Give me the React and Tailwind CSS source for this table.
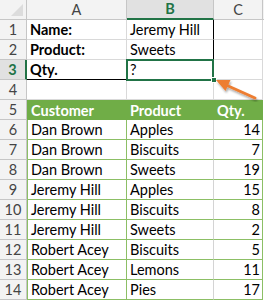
const data = [
  [6, "Dan Brown", "Apples", 14],
  [7, "Dan Brown", "Biscuits", 7],
  [8, "Dan Brown", "Sweets", 19],
  [9, "Jeremy Hill", "Apples", 15],
  [10, "Jeremy Hill", "Biscuits", 8],
  [11, "Jeremy Hill", "Sweets", 2],
  [12, "Robert Acey", "Biscuits", 5],
  [13, "Robert Acey", "Lemons", 11],
  [14, "Robert Acey", "Pies", 17],
]

function Cell({ className = "", children }) {
  return (
    <div className={"h-5 overflow-hidden whitespace-nowrap flex items-end leading-[18px] text-[14.5px] " + className}>
      {children}
    </div>
  )
}

function RowNum({ n, className = "" }) {
  return (
    <Cell className={"justify-center bg-[#f3f3f3] border-r border-b border-[#c6c6c6] text-[#444] " + className}>
      {n}
    </Cell>
  )
}

const grid = "border-r border-b border-[#d9d9d9]"

export default function App() {
  return (
    <div className="relative w-[264px] h-[300px] overflow-hidden bg-white text-black" style={{ fontFamily: "Lato, 'Liberation Sans', sans-serif" }}>
      <div className="grid grid-cols-[27px_100px_87px_49px_1fr] auto-rows-[20px]">
        {/* column headers */}
        <div className="h-5 bg-[#f3f3f3] border-r border-b border-[#c6c6c6] flex items-end justify-end p-[3px]">
          <svg width="12" height="12" viewBox="0 0 12 12"><polygon points="12,0 12,12 0,12" fill="#dcdcdc" /></svg>
        </div>
        <Cell className="justify-center bg-[#f3f3f3] border-r border-b border-[#c6c6c6] text-[#444]">A</Cell>
        <Cell className="justify-center bg-[#e1e1e1] border-r border-[#c6c6c6] border-b-2 border-b-[#217346] text-[#217346] font-bold">B</Cell>
        <Cell className="justify-center bg-[#f3f3f3] border-r border-b border-[#c6c6c6] text-[#444]">C</Cell>
        <Cell className="bg-[#f3f3f3] border-b border-[#c6c6c6]" />

        {/* row 1 */}
        <RowNum n={1} />
        <Cell className={grid + " pl-[3px] font-bold"}>Name:</Cell>
        <Cell className="border-r border-r-black border-b border-b-[#d9d9d9] pl-[3px]">Jeremy Hill</Cell>
        <Cell className={grid} />
        <Cell />

        {/* row 2 */}
        <RowNum n={2} />
        <Cell className={grid + " pl-[3px] font-bold"}>Product:</Cell>
        <Cell className="border-r border-r-black border-b border-b-[#d9d9d9] pl-[3px]">Sweets</Cell>
        <Cell className={grid} />
        <Cell />

        {/* row 3 */}
        <RowNum n={3} className="!bg-[#e1e1e1] border-r-2 !border-r-[#217346] !text-[#217346] font-bold" />
        <Cell className="border-r border-r-[#d9d9d9] border-b border-b-black pl-[3px] font-bold">Qty.</Cell>
        <Cell className="border-r border-b border-black pl-[3px]">?</Cell>
        <Cell className={grid} />
        <Cell />

        {/* row 4 */}
        <RowNum n={4} />
        <Cell className={grid} />
        <Cell className={grid} />
        <Cell className={grid} />
        <Cell />

        {/* row 5 - table header */}
        <RowNum n={5} />
        <Cell className="bg-[#70ad47] text-white font-bold pl-[4px]">Customer</Cell>
        <Cell className="bg-[#70ad47] text-white font-bold pl-[3px]">Product</Cell>
        <Cell className="bg-[#70ad47] text-white font-bold pl-[3px]">Qty.</Cell>
        <Cell />

        {data.map(([n, customer, product, qty]) => (
          <div key={n} className="contents">
            <RowNum n={n} />
            <Cell className="border-l border-r border-b border-[#8cbf65] pl-[3px]">{customer}</Cell>
            <Cell className="border-r border-r-[#d4d4d4] border-b border-b-[#8cbf65] pl-[3px]">{product}</Cell>
            <Cell className="border-r border-b border-[#8cbf65] justify-end pr-[2px]">{qty}</Cell>
            <Cell />
          </div>
        ))}
      </div>

      {/* selection box on B3 */}
      <div className="absolute left-[126px] top-[59px] w-[88px] h-[22px] border-2 border-[#217346]" />
      <div className="absolute left-[211px] top-[77px] w-[6px] h-[6px] bg-[#217346] border border-white" />

      {/* orange arrow */}
      <svg className="absolute left-0 top-0 pointer-events-none" width="264" height="300">
        <defs>
          <filter id="sh" x="-20%" y="-20%" width="140%" height="140%">
            <feDropShadow dx="1" dy="2" stdDeviation="1.2" floodColor="#000" floodOpacity="0.35" />
          </filter>
        </defs>
        <g filter="url(#sh)">
          <line x1="255" y1="98" x2="226" y2="85" stroke="#ed7d31" strokeWidth="3" strokeLinecap="round" />
          <polygon points="216,80 230.5,80 225.5,91" fill="#ed7d31" />
        </g>
      </svg>
    </div>
  )
}
